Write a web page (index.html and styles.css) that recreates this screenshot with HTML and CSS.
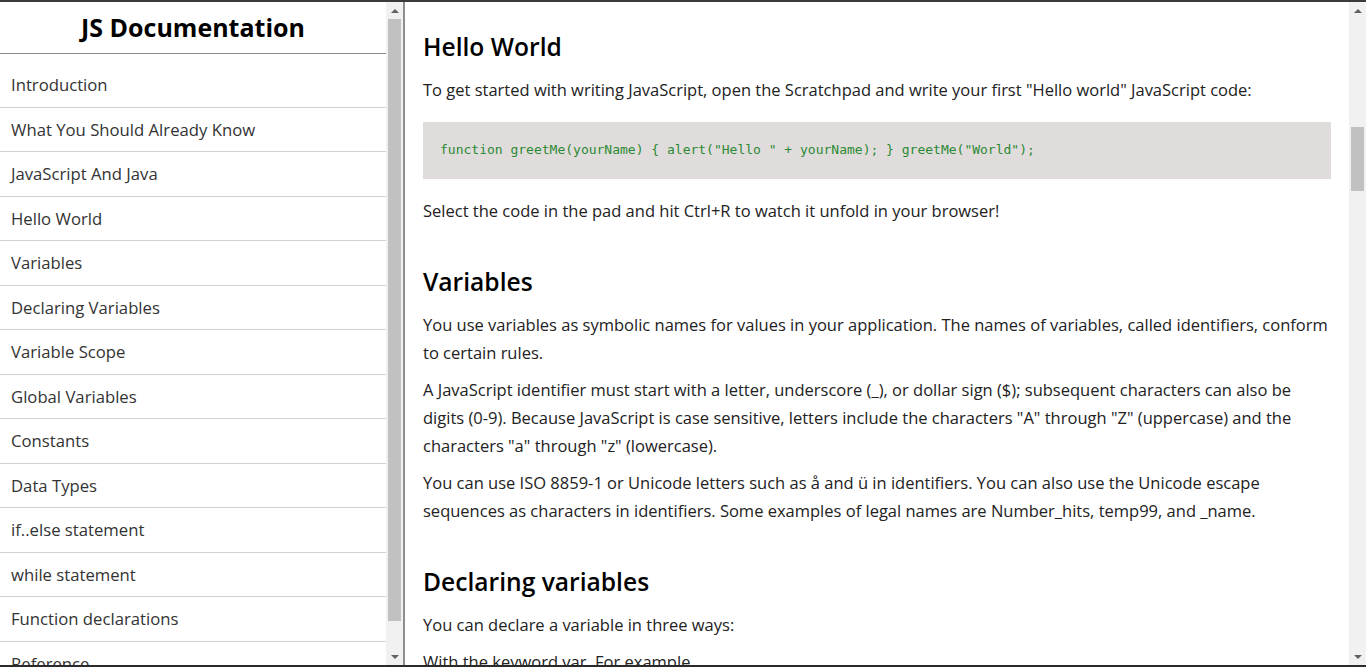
FILE: index.html
```html
<!DOCTYPE html>
<html lang="en">
<head>
<meta charset="utf-8">
<title>JS Documentation</title>
<link rel="stylesheet" href="styles.css">
</head>
<body>
<aside class="sidebar">
  <nav class="navbar" id="navbar">
    <header class="nav-title">JS Documentation</header>
    <ul class="nav-list">
      <li><a class="nav-link" href="#introduction">Introduction</a></li>
      <li><a class="nav-link" href="#what_you_should_already_know">What You Should Already Know</a></li>
      <li><a class="nav-link" href="#javascript_and_java">JavaScript And Java</a></li>
      <li><a class="nav-link" href="#hello_world">Hello World</a></li>
      <li><a class="nav-link" href="#variables">Variables</a></li>
      <li><a class="nav-link" href="#declaring_variables">Declaring Variables</a></li>
      <li><a class="nav-link" href="#variable_scope">Variable Scope</a></li>
      <li><a class="nav-link" href="#global_variables">Global Variables</a></li>
      <li><a class="nav-link" href="#constants">Constants</a></li>
      <li><a class="nav-link" href="#data_types">Data Types</a></li>
      <li><a class="nav-link" href="#if_else_statement">if..else statement</a></li>
      <li><a class="nav-link" href="#while_statement">while statement</a></li>
      <li><a class="nav-link" href="#function_declarations">Function declarations</a></li>
      <li><a class="nav-link" href="#reference">Reference</a></li>
    </ul>
  </nav>
  <div class="scrollbar" aria-hidden="true">
    <span class="sb-btn"><span class="arrow-up"></span></span>
    <div class="sb-track"><div class="sb-thumb" style="margin-top:0px;height:602px"></div></div>
    <span class="sb-btn"><span class="arrow-down"></span></span>
  </div>
</aside>
<div class="main-wrap">
<main class="content" id="main-doc">
  <section class="main-section" id="introduction">
    <h2 class="section-title">Introduction</h2>
    <p class="text">JavaScript is a cross-platform, object-oriented scripting language. It is a small and lightweight language. Inside a host environment (for example, a web browser), JavaScript can be connected to the objects of its environment to provide programmatic control over them.</p>
    <p class="text">JavaScript contains a standard library of objects, such as Array, Date, and Math, and a core set of language elements such as operators, control structures, and statements. Core JavaScript can be extended for a variety of purposes by supplementing it with additional objects; for example:</p>
    <ul class="list">
      <li>Client-side JavaScript extends the core language by supplying objects to control a browser and its Document Object Model (DOM). For example, client-side extensions allow an application to place elements on an HTML form and respond to user events such as mouse clicks, form input, and page navigation.</li>
      <li>Server-side JavaScript extends the core language by supplying objects relevant to running JavaScript on a server. For example, server-side extensions allow an application to communicate with a database, provide continuity of information from one invocation to another of the application, or perform file manipulations on a server.</li>
    </ul>
  </section>
  <section class="main-section" id="what_you_should_already_know">
    <h2 class="section-title">What you should already know</h2>
    <p class="text">This guide assumes you have the following basic background:</p>
    <ul class="list">
      <li>A general understanding of the Internet and the World Wide Web (WWW).</li>
      <li>Good working knowledge of HyperText Markup Language (HTML).</li>
      <li>Some programming experience. If you are new to programming, try one of the tutorials linked on the main page about JavaScript.</li>
    </ul>
  </section>
  <section class="main-section" id="javascript_and_java">
    <h2 class="section-title">JavaScript and Java</h2>
    <p class="text">JavaScript and Java are similar in some ways but fundamentally different in some others. The JavaScript language resembles Java but does not have Java's static typing and strong type checking. JavaScript follows most Java expression syntax, naming conventions and basic control-flow constructs which was the reason why it was renamed from LiveScript to JavaScript.</p>
    <p class="text">In contrast to Java's compile-time system of classes built by declarations, JavaScript supports a runtime system based on a small number of data types representing numeric, Boolean, and string values. JavaScript has a prototype-based object model instead of the more common class-based object model. The prototype-based model provides dynamic inheritance; that is, what is inherited can vary for individual objects. JavaScript also supports functions without any special declarative requirements. Functions can be properties of objects, executing as loosely typed methods.</p>
    <p class="text">JavaScript is a very free-form language compared to Java. You do not have to declare all variables, classes, and methods. You do not have to be concerned with whether methods are public, private, or protected, and you do not have to implement interfaces. Variables, parameters, and function return types are not explicitly typed.</p>
  </section>
  <section class="main-section" id="hello_world">
    <h2 class="section-title">Hello World</h2>
    <p class="text">To get started with writing JavaScript, open the Scratchpad and write your first "Hello world" JavaScript code:</p>
    <div class="code"><code>function greetMe(yourName) { alert("Hello " + yourName); } greetMe("World");</code></div>
    <p class="text">Select the code in the pad and hit Ctrl+R to watch it unfold in your browser!</p>
  </section>
  <section class="main-section" id="variables">
    <h2 class="section-title">Variables</h2>
    <p class="text">You use variables as symbolic names for values in your application. The names of variables, called identifiers, conform to certain rules.</p>
    <p class="text">A JavaScript identifier must start with a letter, underscore (_), or dollar sign ($); subsequent characters can also be digits (0-9). Because JavaScript is case sensitive, letters include the characters "A" through "Z" (uppercase) and the characters "a" through "z" (lowercase).</p>
    <p class="text">You can use ISO 8859-1 or Unicode letters such as å and ü in identifiers. You can also use the Unicode escape sequences as characters in identifiers. Some examples of legal names are Number_hits, temp99, and _name.</p>
  </section>
  <section class="main-section" id="declaring_variables">
    <h2 class="section-title">Declaring variables</h2>
    <p class="text">You can declare a variable in three ways:</p>
    <p class="text">With the keyword var. For example,</p>
    <div class="code"><code>var x = 42.</code></div>
    <p class="text">This syntax can be used to declare both local and global variables.</p>
    <p class="text">By simply assigning it a value. For example,</p>
    <div class="code"><code>x = 42.</code></div>
    <p class="text">This always declares a global variable. It generates a strict JavaScript warning. You shouldn't use this variant.</p>
    <p class="text">With the keyword let. For example,</p>
    <div class="code"><code>let y = 13.</code></div>
    <p class="text">This syntax can be used to declare a block scope local variable. See Variable scope below.</p>
  </section>
  <section class="main-section" id="variable_scope">
    <h2 class="section-title">Variable scope</h2>
    <p class="text">When you declare a variable outside of any function, it is called a global variable, because it is available to any other code in the current document. When you declare a variable within a function, it is called a local variable, because it is available only within that function.</p>
    <p class="text">JavaScript before ECMAScript 2015 does not have block statement scope; rather, a variable declared within a block is local to the function (or global scope) that the block resides within. For example the following code will log 5, because the scope of x is the function (or global context) within which x is declared, not the block, which in this case is an if statement.</p>
    <div class="code"><code>if (true) { var x = 5; } console.log(x); // 5</code></div>
    <p class="text">This behavior changes, when using the let declaration introduced in ECMAScript 2015.</p>
    <div class="code"><code>if (true) { let y = 5; } console.log(y); // ReferenceError: y is not defined</code></div>
  </section>
  <section class="main-section" id="global_variables">
    <h2 class="section-title">Global variables</h2>
    <p class="text">Global variables are in fact properties of the global object. In web pages the global object is window, so you can set and access global variables using the window.variable syntax.</p>
    <p class="text">Consequently, you can access global variables declared in one window or frame from another window or frame by specifying the window or frame name. For example, if a variable called phoneNumber is declared in a document, you can refer to this variable from an iframe as parent.phoneNumber.</p>
  </section>
  <section class="main-section" id="constants">
    <h2 class="section-title">Constants</h2>
    <p class="text">You can create a read-only, named constant with the const keyword. The syntax of a constant identifier is the same as for a variable identifier: it must start with a letter, underscore or dollar sign and can contain alphabetic, numeric, or underscore characters.</p>
    <div class="code"><code>const PI = 3.14;</code></div>
    <p class="text">A constant cannot change value through assignment or be re-declared while the script is running. It has to be initialized to a value.</p>
    <p class="text">The scope rules for constants are the same as those for let block scope variables. If the const keyword is omitted, the identifier is assumed to represent a variable.</p>
    <p class="text">You cannot declare a constant with the same name as a function or variable in the same scope. For example:</p>
    <div class="code"><code>// THIS WILL CAUSE AN ERROR function f() {}; const f = 5; // THIS WILL CAUSE AN ERROR ALSO function f() { const g = 5; var g; //statements }</code></div>
    <p class="text">However, object attributes are not protected, so the following statement is executed without problems.</p>
    <div class="code"><code>const MY_OBJECT = {"key": "value"}; MY_OBJECT.key = "otherValue";</code></div>
  </section>
  <section class="main-section" id="data_types">
    <h2 class="section-title">Data types</h2>
    <p class="text">The latest ECMAScript standard defines seven data types:</p>
    <ul class="list">
      <li>Six data types that are primitives:
        <ul class="list">
          <li>Boolean. true and false.</li>
          <li>null. A special keyword denoting a null value. Because JavaScript is case-sensitive, null is not the same as Null, NULL, or any other variant.</li>
          <li>undefined. A top-level property whose value is undefined.</li>
          <li>Number. 42 or 3.14159.</li>
          <li>String. "Howdy"</li>
          <li>Symbol (new in ECMAScript 2015). A data type whose instances are unique and immutable.</li>
        </ul>
      </li>
      <li>and Object</li>
    </ul>
    <p class="text">Although these data types are a relatively small amount, they enable you to perform useful functions with your applications. Objects and functions are the other fundamental elements in the language. You can think of objects as named containers for values, and functions as procedures that your application can perform.</p>
  </section>
  <section class="main-section" id="if_else_statement">
    <h2 class="section-title">if...else statement</h2>
    <p class="text">Use the if statement to execute a statement if a logical condition is true. Use the optional else clause to execute a statement if the condition is false. An if statement looks as follows:</p>
    <div class="code"><code>if (condition) { statement_1; } else { statement_2; }</code></div>
    <p class="text">condition can be any expression that evaluates to true or false. See Boolean for an explanation of what evaluates to true and false. If condition evaluates to true, statement_1 is executed; otherwise, statement_2 is executed. statement_1 and statement_2 can be any statement, including further nested if statements.</p>
    <p class="text">You may also compound the statements using else if to have multiple conditions tested in sequence, as follows:</p>
    <div class="code"><code>if (condition_1) { statement_1; } else if (condition_2) { statement_2; } else if (condition_n) { statement_n; } else { statement_last; }</code></div>
    <p class="text">In the case of multiple conditions only the first logical condition which evaluates to true will be executed. To execute multiple statements, group them within a block statement ({ ... }) . In general, it's good practice to always use block statements, especially when nesting if statements:</p>
    <div class="code"><code>if (condition) { statement_1_runs_if_condition_is_true; statement_2_runs_if_condition_is_true; } else { statement_3_runs_if_condition_is_false; statement_4_runs_if_condition_is_false; }</code></div>
    <p class="text">It is advisable to not use simple assignments in a conditional expression, because the assignment can be confused with equality when glancing over the code. For example, do not use the following code:</p>
    <div class="code"><code>if (x = y) { /* statements here */ }</code></div>
    <p class="text">If you need to use an assignment in a conditional expression, a common practice is to put additional parentheses around the assignment. For example:</p>
    <div class="code"><code>if ((x = y)) { /* statements here */ }</code></div>
  </section>
  <section class="main-section" id="while_statement">
    <h2 class="section-title">while statement</h2>
    <p class="text">A while statement executes its statements as long as a specified condition evaluates to true. A while statement looks as follows:</p>
    <div class="code"><code>while (condition) statement</code></div>
    <p class="text">If the condition becomes false, statement within the loop stops executing and control passes to the statement following the loop.</p>
    <p class="text">The condition test occurs before statement in the loop is executed. If the condition returns true, statement is executed and the condition is tested again. If the condition returns false, execution stops and control is passed to the statement following while.</p>
    <p class="text">To execute multiple statements, use a block statement ({ ... }) to group those statements.</p>
    <p class="text">Example:</p>
    <p class="text">The following while loop iterates as long as n is less than three:</p>
    <div class="code"><code>var n = 0; var x = 0; while (n &lt; 3) { n++; x += n; }</code></div>
    <p class="text">With each iteration, the loop increments n and adds that value to x. Therefore, x and n take on the following values:</p>
    <ul class="list">
      <li>After the first pass: n = 1 and x = 1</li>
      <li>After the second pass: n = 2 and x = 3</li>
      <li>After the third pass: n = 3 and x = 6</li>
    </ul>
    <p class="text">After completing the third pass, the condition n &lt; 3 is no longer true, so the loop terminates.</p>
  </section>
  <section class="main-section" id="function_declarations">
    <h2 class="section-title">Function declarations</h2>
    <p class="text">A function definition (also called a function declaration, or function statement) consists of the function keyword, followed by:</p>
    <ul class="list">
      <li>The name of the function.</li>
      <li>A list of arguments to the function, enclosed in parentheses and separated by commas.</li>
      <li>The JavaScript statements that define the function, enclosed in curly brackets, { }.</li>
    </ul>
    <p class="text">For example, the following code defines a simple function named square:</p>
    <div class="code"><code>function square(number) { return number * number; }</code></div>
    <p class="text">The function square takes one argument, called number. The function consists of one statement that says to return the argument of the function (that is, number) multiplied by itself. The return statement specifies the value returned by the function.</p>
    <div class="code"><code>return number * number;</code></div>
    <p class="text">Primitive parameters (such as a number) are passed to functions by value; the value is passed to the function, but if the function changes the value of the parameter, this change is not reflected globally or in the calling function.</p>
  </section>
  <section class="main-section" id="reference">
    <h2 class="section-title">Reference</h2>
    <ul class="list">
      <li>All the documentation in this page is taken from MDN</li>
    </ul>
  </section>
</main>
  <div class="scrollbar" aria-hidden="true">
    <span class="sb-btn"><span class="arrow-up"></span></span>
    <div class="sb-track"><div class="sb-thumb" style="margin-top:108px;height:64px"></div></div>
    <span class="sb-btn"><span class="arrow-down"></span></span>
  </div>
</div>
<script src="script.js"></script>
</body>
</html>
```
FILE: styles.css
```css
html, body {
  height: 100%;
}

body {
  margin: 0;
  box-sizing: border-box;
  height: 100vh;
  display: flex;
  overflow: hidden;
  background: #ffffff;
  border-top: 2px solid #3a3a3a;
  border-bottom: 2px solid #2a2a2a;
  font-family: "Open Sans", "Noto Sans", sans-serif;
  color: #222222;
}

/* ---------- sidebar ---------- */
.sidebar {
  width: 403px;
  flex: none;
  display: flex;
  border-right: 2px solid #8e8e8e;
}

.navbar {
  flex: 1;
  min-width: 0;
  overflow: hidden;
}

.nav-title {
  margin: 0;
  font-size: 25px;
  line-height: 51px;
  font-weight: 700;
  text-align: center;
  color: #000000;
  border-bottom: 1px solid #8a8a8a;
}

.nav-list {
  list-style: none;
  margin: 9px 0;
  padding: 0;
}

.nav-link {
  display: block;
  padding: 1px 11px 0;
  line-height: 42.5px;
  font-size: 16.7px;
  color: #333333;
  text-decoration: none;
  border-bottom: 1px solid #d2d2d2;
}

/* ---------- main ---------- */
.main-wrap {
  flex: 1;
  min-width: 0;
  display: flex;
}

.content {
  flex: 1;
  min-width: 0;
  overflow: hidden;
  padding: 0 18px 40px;
}

.section-title {
  margin: 41px 0 14px;
  font-size: 24.6px;
  line-height: 31px;
  font-weight: 600;
  color: #000000;
}

.text {
  margin: 0 0 9px;
  font-size: 16.5px;
  line-height: 28px;
  color: #222222;
}

.list {
  margin: 0 0 9px;
  font-size: 16.5px;
  line-height: 28px;
}

.code {
  margin: 18px 0;
  padding: 18px 17px;
  background: #e0dcdc;
  font-family: "Liberation Mono", "DejaVu Sans Mono", monospace;
  font-size: 13px;
  line-height: 20px;
  color: #2a8a33;
}

/* ---------- drawn scrollbars ---------- */
.scrollbar {
  width: 17px;
  flex: none;
  display: flex;
  flex-direction: column;
  background: #f1f1f1;
}

.sb-btn {
  height: 17px;
  flex: none;
  display: flex;
  align-items: center;
  justify-content: center;
}

.sb-track {
  flex: 1;
  padding: 0 2px;
}

.sb-thumb {
  background: #c1c1c1;
}

.arrow-up {
  width: 0;
  height: 0;
  border-left: 4px solid transparent;
  border-right: 4px solid transparent;
  border-bottom: 4px solid #606060;
}

.arrow-down {
  width: 0;
  height: 0;
  border-left: 4px solid transparent;
  border-right: 4px solid transparent;
  border-top: 4px solid #606060;
}
```
FILE: script.js
```js
(function () {
  var main = document.getElementById('main-doc');
  var heading = document.querySelector('#hello_world .section-title');
  function place() {
    var offset = heading.getBoundingClientRect().top - main.getBoundingClientRect().top;
    main.scrollTop = main.scrollTop + offset - 29.5;
  }
  place();
  window.addEventListener('load', place);
})();
```
